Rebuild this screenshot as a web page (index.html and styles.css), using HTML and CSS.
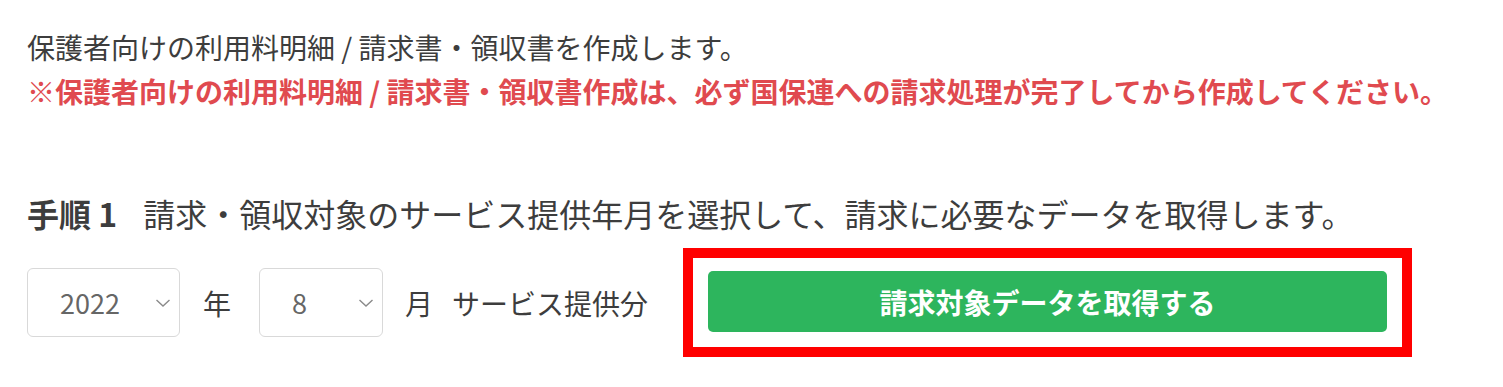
FILE: index.html
```html
<!DOCTYPE html>
<html lang="ja">

<head>
    <meta charset="UTF-8">
    <meta name="viewport" content="width=device-width, initial-scale=1.0">
    <title>請求書・領収書作成</title>
    <link rel="stylesheet" href="styles.css">
</head>

<body>
    <div class="intro">
        <p class="lead">保護者向けの利用料明細 / 請求書・領収書を作成します。</p>
        <p class="notice">※保護者向けの利用料明細 / 請求書・領収書作成は、必ず国保連への請求処理が完了してから作成してください。</p>
    </div>

    <div class="step">
        <h2 class="step-title"><span class="step-no">手順 1</span>請求・領収対象のサービス提供年月を選択して、請求に必要なデータを取得します。</h2>

        <div class="step-row">
            <div class="select select-year">
                <span class="select-value">2022</span>
                <svg class="chevron" width="16" height="10" viewBox="0 0 16 10">
                    <polyline points="1.5,2 8,8 14.5,2" fill="none" stroke="#8a8a8a" stroke-width="1.4" />
                </svg>
            </div>
            <span class="unit unit-year">年</span>
            <div class="select select-month">
                <span class="select-value">8</span>
                <svg class="chevron" width="16" height="10" viewBox="0 0 16 10">
                    <polyline points="1.5,2 8,8 14.5,2" fill="none" stroke="#8a8a8a" stroke-width="1.4" />
                </svg>
            </div>
            <span class="unit unit-month">月</span>
            <span class="unit-text">サービス提供分</span>

            <div class="highlight">
                <button class="btn-fetch">請求対象データを取得する</button>
            </div>
        </div>
    </div>
</body>

</html>
```

FILE: styles.css
```css
body {
    margin: 0;
    padding: 25px 27px 0;
    font-family: "Noto Sans CJK JP", "Noto Sans", sans-serif;
    color: #3d3d3d;
    background-color: #fff;
}

p {
    margin: 0;
}

.lead {
    font-size: 28px;
    line-height: 44px;
}

.notice {
    font-size: 28px;
    line-height: 44px;
    font-weight: bold;
    color: #e04a4f;
}

.step {
    margin-top: 78px;
}

.step-title {
    margin: 0;
    font-size: 32px;
    line-height: 44px;
    font-weight: normal;
}

.step-no {
    font-weight: bold;
    margin-right: 26px;
}

.step-row {
    display: flex;
    align-items: center;
    margin-top: 13px;
}

.select {
    position: relative;
    display: flex;
    align-items: center;
    height: 69px;
    box-sizing: border-box;
    border: 1.5px solid #d9d9d9;
    border-radius: 6px;
    padding-left: 32px;
    font-size: 27px;
    color: #666;
}

.select-year {
    width: 153px;
}

.select-month {
    width: 124px;
}

.chevron {
    position: absolute;
    right: 8px;
    top: 29px;
}

.unit {
    font-size: 28px;
}

.unit-year {
    margin: 0 28px 0 23px;
}

.unit-month {
    margin: 0 19px 0 22px;
}

.unit-text {
    font-size: 28px;
}

.highlight {
    margin-left: 35px;
    border: 10px solid #f00;
    padding: 13px 15px 15px;
}

.btn-fetch {
    display: block;
    width: 679px;
    height: 61px;
    border: none;
    border-radius: 5px;
    background-color: #2db55d;
    color: #fff;
    font-family: inherit;
    font-size: 28px;
    font-weight: bold;
    cursor: pointer;
}
```
